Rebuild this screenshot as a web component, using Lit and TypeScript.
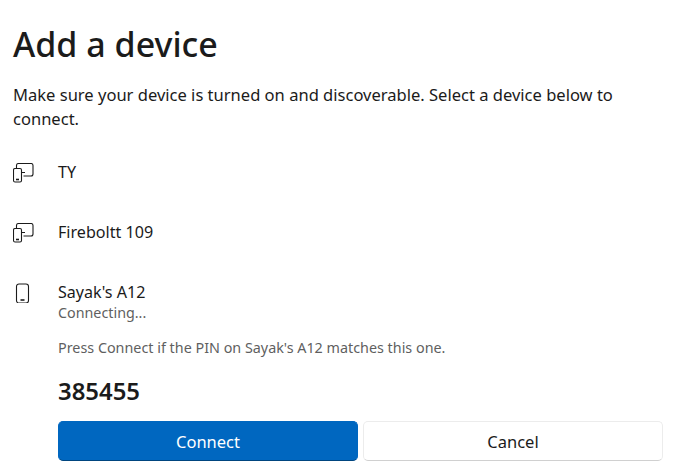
import { LitElement, html, css, svg } from "lit";
import { customElement } from "lit/decorators.js";

const pairIcon = svg`<path d="M3.5 5.5V2.5C3.5 1.4 4.4 .5 5.5 .5H18C19.1 .5 20 1.4 20 2.5V11C20 12.1 19.1 13 18 13H10.5M9 9.5H12M2 5.5H7C7.8 5.5 8.5 6.2 8.5 7V17.5C8.5 18.3 7.8 19 7 19H2C1.2 19 .5 18.3 .5 17.5V7C.5 6.2 1.2 5.5 2 5.5Z"/><path class="dash" d="M3 16.5H6"/>`;
const phoneIcon = svg`<path d="M3 .5H10C11.4 .5 12.5 1.6 12.5 3V17C12.5 18.4 11.4 19.5 10 19.5H3C1.6 19.5 .5 18.4 .5 17V3C.5 1.6 1.6 .5 3 .5Z"/><path class="dash" d="M4.5 16.5H8.5"/>`;

@customElement("app-root")
export class AppRoot extends LitElement {
  static styles = css`
    :host {
      display: block;
      width: 680px;
      height: 475px;
      overflow: hidden;
      background: #fff;
      color: #1b1b1b;
      font-family: "Noto Sans", "Open Sans", sans-serif;
    }
    .page {
      display: flex;
      flex-direction: column;
      padding: 21px 17px 0 13px;
    }
    h1 {
      margin: 0;
      font-size: 34px;
      line-height: 46px;
      font-weight: 500;
    }
    .intro {
      margin: 16px 0 0;
      font-size: 16.55px;
      line-height: 24px;
      width: 630px;
    }
    .rows {
      margin-top: 29px;
    }
    .row {
      display: flex;
      align-items: flex-start;
      height: 60px;
    }
    .icon {
      width: 45px;
      flex: none;
      display: flex;
      padding-top: 3px;
    }
    .icon svg {
      fill: none;
      stroke: #1b1b1b;
      stroke-width: 1.1;
    }
    .icon .dash {
      stroke-width: 1.6;
    }
    .name {
      font-size: 16.1px;
      line-height: 24px;
    }
    .status {
      font-size: 14.3px;
      line-height: 18px;
      color: #5f5f5f;
    }
    .pin-block {
      margin-left: 45px;
    }
    .hint {
      font-size: 14.35px;
      line-height: 20px;
      color: #5f5f5f;
      margin-top: -2px;
    }
    .pin {
      font-size: 23.9px;
      line-height: 32px;
      font-weight: 600;
      margin-top: 17px;
    }
    .actions {
      display: flex;
      gap: 5px;
      margin-top: 14px;
    }
    button {
      width: 300px;
      height: 40px;
      border-radius: 5px;
      font: inherit;
      font-size: 16.5px;
      padding: 0;
    }
    .primary {
      background: #0067c0;
      color: #fff;
      border: 1px solid #0067c0;
      border-bottom-color: #00457f;
    }
    .secondary {
      background: #fff;
      color: #1b1b1b;
      border: 1px solid #ececec;
      border-bottom-color: #d0d0d0;
    }
  `;

  render() {
    return html`
      <div class="page">
        <h1>Add a device</h1>
        <p class="intro">Make sure your device is turned on and discoverable. Select a device below to connect.</p>
        <div class="rows">
          <div class="row">
            <div class="icon"><svg width="21" height="20" viewBox="0 0 21 20">${pairIcon}</svg></div>
            <div class="name">TY</div>
          </div>
          <div class="row">
            <div class="icon"><svg width="21" height="20" viewBox="0 0 21 20">${pairIcon}</svg></div>
            <div class="name">Fireboltt 109</div>
          </div>
          <div class="row">
            <div class="icon"><svg width="21" height="20" viewBox="-3 -0.5 21 20">${phoneIcon}</svg></div>
            <div>
              <div class="name">Sayak's A12</div>
              <div class="status">Connecting...</div>
            </div>
          </div>
        </div>
        <div class="pin-block">
          <div class="hint">Press Connect if the PIN on Sayak's A12 matches this one.</div>
          <div class="pin">385455</div>
          <div class="actions">
            <button class="primary">Connect</button>
            <button class="secondary">Cancel</button>
          </div>
        </div>
      </div>
    `;
  }
}
